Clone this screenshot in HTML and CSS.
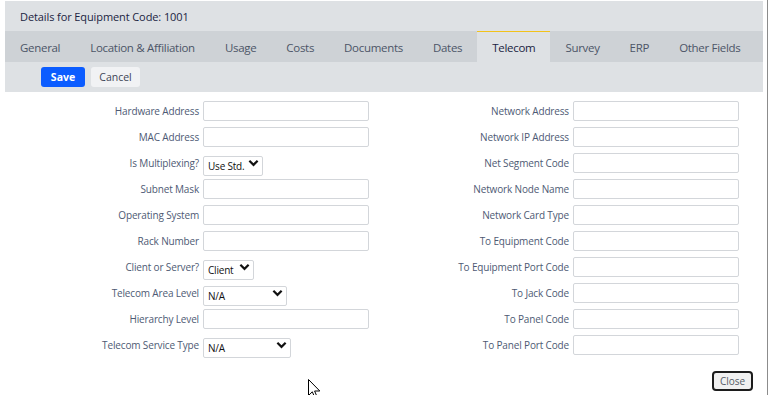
FILE: index.html
```html
<!DOCTYPE html>
<html lang="en">
<head>
  <meta charset="UTF-8">
  <title>Details for Equipment Code: 1001</title>
  <link rel="stylesheet" href="styles.css">
</head>
<body>
  <div class="window">
    <!-- Header, tabs and toolbar -->
    <div class="panel">
      <div class="panel-title">Details for Equipment Code: 1001</div>
      <ul class="tabs">
        <li class="tab">General</li>
        <li class="tab">Location &amp; Affiliation</li>
        <li class="tab">Usage</li>
        <li class="tab">Costs</li>
        <li class="tab">Documents</li>
        <li class="tab">Dates</li>
        <li class="tab active">Telecom</li>
        <li class="tab">Survey</li>
        <li class="tab">ERP</li>
        <li class="tab">Other Fields</li>
      </ul>
      <div class="toolbar">
        <button class="btn btn-primary">Save</button>
        <button class="btn btn-light">Cancel</button>
      </div>
    </div>

    <!-- Telecom form -->
    <form class="form">
      <label class="label">Hardware Address</label>
      <input class="field" type="text">
      <label class="label">Network Address</label>
      <input class="field" type="text">

      <label class="label">MAC Address</label>
      <input class="field" type="text">
      <label class="label">Network IP Address</label>
      <input class="field" type="text">

      <label class="label">Is Multiplexing?</label>
      <span class="select select-std">
        <select><option>Use Std.</option></select>
        <svg class="chevron" viewBox="0 0 12 8"><path d="M1.5 1.5 6 6 10.5 1.5"/></svg>
      </span>
      <label class="label">Net Segment Code</label>
      <input class="field" type="text">

      <label class="label">Subnet Mask</label>
      <input class="field" type="text">
      <label class="label">Network Node Name</label>
      <input class="field" type="text">

      <label class="label">Operating System</label>
      <input class="field" type="text">
      <label class="label">Network Card Type</label>
      <input class="field" type="text">

      <label class="label">Rack Number</label>
      <input class="field" type="text">
      <label class="label">To Equipment Code</label>
      <input class="field" type="text">

      <label class="label">Client or Server?</label>
      <span class="select select-client">
        <select><option>Client</option></select>
        <svg class="chevron" viewBox="0 0 12 8"><path d="M1.5 1.5 6 6 10.5 1.5"/></svg>
      </span>
      <label class="label">To Equipment Port Code</label>
      <input class="field" type="text">

      <label class="label">Telecom Area Level</label>
      <span class="select select-area">
        <select><option>N/A</option></select>
        <svg class="chevron" viewBox="0 0 12 8"><path d="M1.5 1.5 6 6 10.5 1.5"/></svg>
      </span>
      <label class="label">To Jack Code</label>
      <input class="field" type="text">

      <label class="label">Hierarchy Level</label>
      <input class="field" type="text">
      <label class="label">To Panel Code</label>
      <input class="field" type="text">

      <label class="label">Telecom Service Type</label>
      <span class="select select-service">
        <select><option>N/A</option></select>
        <svg class="chevron" viewBox="0 0 12 8"><path d="M1.5 1.5 6 6 10.5 1.5"/></svg>
      </span>
      <label class="label">To Panel Port Code</label>
      <input class="field" type="text">
    </form>

    <div class="footer">
      <button class="btn-close">Close</button>
    </div>

    <!-- Mouse pointer -->
    <svg class="cursor" viewBox="0 0 13 20">
      <path d="M0.5 0.5 V16.5 L4.3 12.8 L6.8 18.6 L9 17.6 L6.6 12 H11.8 Z"/>
    </svg>
  </div>
</body>
</html>
```

FILE: styles.css
```css
:root {
  --panel: #dee1e4;
  --tabs: #ced2d6;
  --title: #1b2442;
  --tab-text: #4c5567;
  --label: #4e5a74;
  --border: #d3d6da;
  --accent: #f2c21b;
  --blue: #0b5cff;
}
* {
  margin: 0;
  padding: 0;
  box-sizing: border-box;
}
body {
  font-family: "Open Sans", "Noto Sans", sans-serif;
  background: #ffffff;
  width: 769px;
  height: 395px;
  overflow: hidden;
}
.window {
  position: relative;
  width: 768px;
  height: 395px;
  border-right: 1px solid #8c8c8c;
  padding: 1px 4px 0 5px;
}

/* Top panel */
.panel {
  background: var(--panel);
}
.panel-title {
  height: 30px;
  display: flex;
  align-items: center;
  padding-left: 15px;
  font-size: 11px;
  letter-spacing: -0.1px;
  color: var(--title);
}
.tabs {
  list-style: none;
  display: flex;
  height: 31px;
  background: var(--tabs);
}
.tab {
  display: flex;
  align-items: center;
  padding: 0 15px;
  font-size: 11.5px;
  letter-spacing: -0.3px;
  white-space: nowrap;
  color: var(--tab-text);
  border-top: 1px solid transparent;
}
.tab.active {
  background: var(--panel);
  border-top-color: var(--accent);
  color: var(--title);
}
.toolbar {
  height: 30px;
  display: flex;
  align-items: center;
  gap: 6px;
  padding-left: 36px;
}
.btn {
  height: 20px;
  border: none;
  border-radius: 3px;
  font-family: inherit;
  font-size: 10.5px;
  padding: 0;
}
.btn-primary {
  background: var(--blue);
  color: #ffffff;
  font-weight: bold;
  width: 44px;
}
.btn-light {
  background: #f1f2f4;
  color: #3d4556;
  width: 49px;
}

/* Form grid */
.form {
  display: grid;
  grid-template-columns: 194px 166px 196px 166px;
  grid-auto-rows: 20px;
  column-gap: 4px;
  row-gap: 6px;
  padding-top: 9px;
}
.label {
  display: flex;
  align-items: center;
  justify-content: flex-end;
  font-size: 10px;
  letter-spacing: -0.15px;
  color: var(--label);
  white-space: nowrap;
}
.field {
  height: 20px;
  border: 1px solid var(--border);
  border-radius: 2px;
  background: #ffffff;
}
.select {
  position: relative;
  display: block;
  height: 20px;
}
.select select {
  appearance: none;
  -webkit-appearance: none;
  width: 100%;
  height: 20px;
  border: 1px solid var(--border);
  border-radius: 2px;
  background: #ffffff;
  font-family: inherit;
  font-size: 10px;
  letter-spacing: -0.2px;
  color: #111111;
  padding-left: 4px;
}
.select-std {
  width: 60px;
}
.select-client {
  width: 51px;
}
.select-area {
  width: 84px;
}
.select-service {
  width: 88px;
}
.chevron {
  position: absolute;
  right: 4px;
  top: 6px;
  width: 11px;
  height: 8px;
  fill: none;
  stroke: #111111;
  stroke-width: 2.4;
  pointer-events: none;
}

/* Footer */
.footer {
  display: flex;
  justify-content: flex-end;
  padding: 16px 10px 0 0;
}
.btn-close {
  width: 41px;
  height: 20px;
  border: 2px solid #1c1c1c;
  border-radius: 4px;
  background: #f0f0f0;
  color: #555b66;
  font-family: inherit;
  font-size: 10px;
}

.cursor {
  position: absolute;
  left: 308px;
  top: 379px;
  width: 13px;
  height: 20px;
  fill: #ffffff;
  stroke: #000000;
  stroke-width: 1;
}
```
